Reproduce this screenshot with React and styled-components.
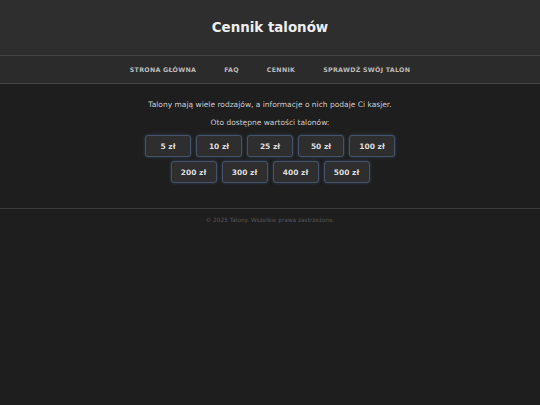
import React from "react";
import styled, { createGlobalStyle } from "styled-components";

const Global = createGlobalStyle`
  html, body { margin: 0; padding: 0; background: #1e1e1e; }
  body { font-family: "DejaVu Sans", Verdana, sans-serif; color: #ddd; }
`;

const Header = styled.header`
  height: 55px;
  background: #2e2e2e;
  border-bottom: 1px solid #444;
  display: flex;
  align-items: center;
  justify-content: center;
`;

const Title = styled.h1`
  margin: 0;
  font-size: 13.4px;
  font-weight: bold;
  color: #eee;
`;

const Nav = styled.nav`
  height: 27px;
  background: #2b2b2b;
  border-bottom: 1px solid #444;
  display: flex;
  align-items: center;
  justify-content: center;
  gap: 28px;
`;

const NavLink = styled.a`
  font-size: 6.3px;
  font-weight: bold;
  letter-spacing: 0.28px;
  text-transform: uppercase;
  color: #bbb;
  text-decoration: none;
`;

const Main = styled.main`
  padding: 16px 0 25px;
  display: flex;
  flex-direction: column;
  align-items: center;
`;

const Text = styled.p`
  margin: 0 0 ${(p) => p.$space}px;
  font-size: 7.5px;
  line-height: 10px;
  color: #ccc;
`;

const Grid = styled.div`
  display: flex;
  flex-wrap: wrap;
  justify-content: center;
  gap: 4px 5px;
  width: 260px;
`;

const Btn = styled.button`
  width: 46px;
  height: 22px;
  background: #2e2e2e;
  border: 1px solid #44536a;
  border-radius: 3px;
  box-shadow: 0 0 3px rgba(90, 125, 170, 0.45);
  color: #ddd;
  font-family: inherit;
  font-size: 7.5px;
  font-weight: bold;
  padding: 0;
`;

const Footer = styled.footer`
  border-top: 1px solid #3a3a3a;
  padding: 8px 0;
  text-align: center;
  font-size: 5.8px;
  color: #555;
`;

const values = [5, 10, 25, 50, 100, 200, 300, 400, 500];

export default function App() {
  return (
    <>
      <Global />
      <Header>
        <Title>Cennik talonów</Title>
      </Header>
      <Nav>
        <NavLink href="#">Strona główna</NavLink>
        <NavLink href="#">FAQ</NavLink>
        <NavLink href="#">Cennik</NavLink>
        <NavLink href="#">Sprawdź swój talon</NavLink>
      </Nav>
      <Main>
        <Text $space={8}>Talony mają wiele rodzajów, a informacje o nich podaje Ci kasjer.</Text>
        <Text $space={7}>Oto dostępne wartości talonów:</Text>
        <Grid>
          {values.map((v) => (
            <Btn key={v}>{v} zł</Btn>
          ))}
        </Grid>
      </Main>
      <Footer>© 2025 Talony. Wszelkie prawa zastrzeżone.</Footer>
    </>
  );
}
